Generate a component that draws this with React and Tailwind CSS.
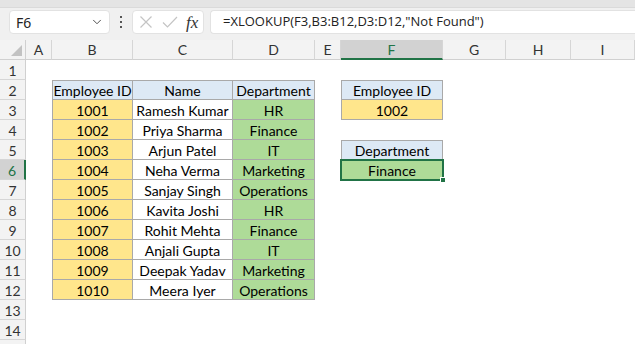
import { ChevronDown } from 'lucide-react';
import clsx from 'clsx';

const cols = ['A', 'B', 'C', 'D', 'E', 'F', 'G', 'H', 'I'];

const employees = [
    ['1001', 'Ramesh Kumar', 'HR'],
    ['1002', 'Priya Sharma', 'Finance'],
    ['1003', 'Arjun Patel', 'IT'],
    ['1004', 'Neha Verma', 'Marketing'],
    ['1005', 'Sanjay Singh', 'Operations'],
    ['1006', 'Kavita Joshi', 'HR'],
    ['1007', 'Rohit Mehta', 'Finance'],
    ['1008', 'Anjali Gupta', 'IT'],
    ['1009', 'Deepak Yadav', 'Marketing'],
    ['1010', 'Meera Iyer', 'Operations'],
];

const cellFont = { fontFamily: 'Lato, "Open Sans", sans-serif' };

// what sits in a sheet cell, by row number and column letter
const getCell = (r, c) => {
    if (r === 2 && c === 'B') return { text: 'Employee ID', cls: 'bg-[#dde9f5]', box: 'tl' };
    if (r === 2 && c === 'C') return { text: 'Name', cls: 'bg-[#dde9f5]', box: 't' };
    if (r === 2 && c === 'D') return { text: 'Department', cls: 'bg-[#dde9f5]', box: 't' };
    if (r >= 3 && r <= 12) {
        const e = employees[r - 3];
        if (c === 'B') return { text: e[0], cls: 'bg-[#ffe68c]', box: 'l' };
        if (c === 'C') return { text: e[1], cls: 'bg-white', box: '' };
        if (c === 'D') return { text: e[2], cls: 'bg-[#aedb98]', box: '' };
    }
    if (r === 2 && c === 'F') return { text: 'Employee ID', cls: 'bg-[#dde9f5]', box: 'tl' };
    if (r === 3 && c === 'F') return { text: '1002', cls: 'bg-[#ffe68c]', box: 'l' };
    if (r === 5 && c === 'F') return { text: 'Department', cls: 'bg-[#dde9f5]', box: 'tl' };
    if (r === 6 && c === 'F') return { text: 'Finance', cls: 'bg-[#aedb98]', box: 'l', selected: true };
    return null;
};

const FormulaBar = () => (
    <div className="h-[40px] bg-[#f0f0f0] flex flex-col">
        <div className="h-[8px] bg-[#e4e4e4] border-b border-[#dadada]" />
        <div className="flex items-center h-[26px] mt-[1px] pl-[9px]">
            <div className="w-[101px] h-[24px] bg-white rounded-[4px] border border-[#e2e2e2] flex items-center justify-between pl-[6px] pr-[5px]">
                <span className="text-[14px] text-[#222]" style={{ fontFamily: '"Noto Sans", sans-serif' }}>
                    F6
                </span>
                <ChevronDown size={14} strokeWidth={1.6} className="text-[#444]" />
            </div>
            <div className="w-[22px] flex flex-col items-center gap-[3px]">
                <span className="w-[2px] h-[2px] bg-[#555]" />
                <span className="w-[2px] h-[2px] bg-[#555]" />
                <span className="w-[2px] h-[2px] bg-[#555]" />
            </div>
            <div className="w-[72px] h-[24px] bg-white rounded-[4px] border border-[#e2e2e2] flex items-center pl-[6px]">
                <svg width="14" height="14" viewBox="0 0 14 14" className="mr-[9px]">
                    <path d="M1.5 1.5 L12.5 12.5 M12.5 1.5 L1.5 12.5" stroke="#c4c4c4" strokeWidth="1.2" fill="none" />
                </svg>
                <svg width="16" height="14" viewBox="0 0 16 14" className="mr-[8px]">
                    <path d="M1 7.5 L5.5 12 L15 2" stroke="#c4c4c4" strokeWidth="1.2" fill="none" />
                </svg>
                <span
                    className="italic text-[17px] text-[#333] leading-none"
                    style={{ fontFamily: '"Liberation Serif", serif' }}
                >
                    fx
                </span>
            </div>
            <div className="flex-1 ml-[6px] h-[24px] bg-white rounded-l-[4px] border border-r-0 border-[#e2e2e2] flex items-center pl-[12px]">
                <span className="text-[13px] text-[#222] whitespace-nowrap" style={{ fontFamily: '"Open Sans", sans-serif' }}>
                    =XLOOKUP(F3,B3:B12,D3:D12,"Not Found")
                </span>
            </div>
        </div>
    </div>
);

const Row = ({ r }) => (
    <>
        <div
            className={clsx(
                'flex items-center justify-center pt-[1px] text-[14px] border-b border-[#d6d6d6]',
                r === 6
                    ? 'bg-[#d2d2d2] border-r-2 border-r-[#217346] text-[#217346]'
                    : 'bg-[#f3f3f3] border-r border-r-[#d0d0d0] text-[#333]',
            )}
        >
            {r < 15 ? r : ''}
        </div>
        {cols.map((c) => {
            const cell = getCell(r, c);
            if (!cell) return <div key={c} className="bg-white" />;
            return (
                <div
                    key={c}
                    className={clsx(
                        'relative flex items-center justify-center pt-[1px] text-[14px] text-black border-r border-b border-[#a9a9a9] whitespace-nowrap',
                        cell.cls,
                        cell.box.includes('t') && 'border-t',
                        cell.box.includes('l') && 'border-l',
                    )}
                >
                    {cell.text}
                    {cell.selected && (
                        <>
                            <span className="absolute -left-[2px] -top-[1px] -right-[2px] -bottom-[2px] border-2 border-[#217346]" />
                            <span className="absolute -right-[4px] -bottom-[4px] w-[6px] h-[6px] bg-[#217346] border border-white" />
                        </>
                    )}
                </div>
            );
        })}
    </>
);

const Sheet = () => {
    const rows = Array.from({ length: 15 }, (_, i) => i + 1);
    return (
        <div
            className="grid grid-cols-[26px_26px_81px_100px_82px_26px_102px_63px_65px_1fr] auto-rows-[20px]"
            style={cellFont}
        >
            {/* corner */}
            <div className="bg-[#f3f3f3] border-r border-b border-[#d0d0d0] flex items-end justify-end pr-[3px] pb-[3px]">
                <svg width="11" height="11" viewBox="0 0 11 11">
                    <path d="M11 0 L11 11 L0 11 Z" fill="#c2c2c2" />
                </svg>
            </div>
            {cols.map((c) => (
                <div
                    key={c}
                    className={clsx(
                        'flex items-center justify-center text-[14px] border-r border-[#d6d6d6]',
                        c === 'F'
                            ? 'bg-[#d2d2d2] border-b-2 border-b-[#217346] text-[#217346]'
                            : 'bg-[#f3f3f3] border-b border-b-[#d0d0d0] text-[#333]',
                    )}
                >
                    {c}
                </div>
            ))}
            {rows.map((r) => (
                <Row key={r} r={r} />
            ))}
        </div>
    );
};

const App = () => (
    <div className="w-[635px] h-[344px] overflow-hidden bg-white">
        <FormulaBar />
        <Sheet />
    </div>
);

export default App;
